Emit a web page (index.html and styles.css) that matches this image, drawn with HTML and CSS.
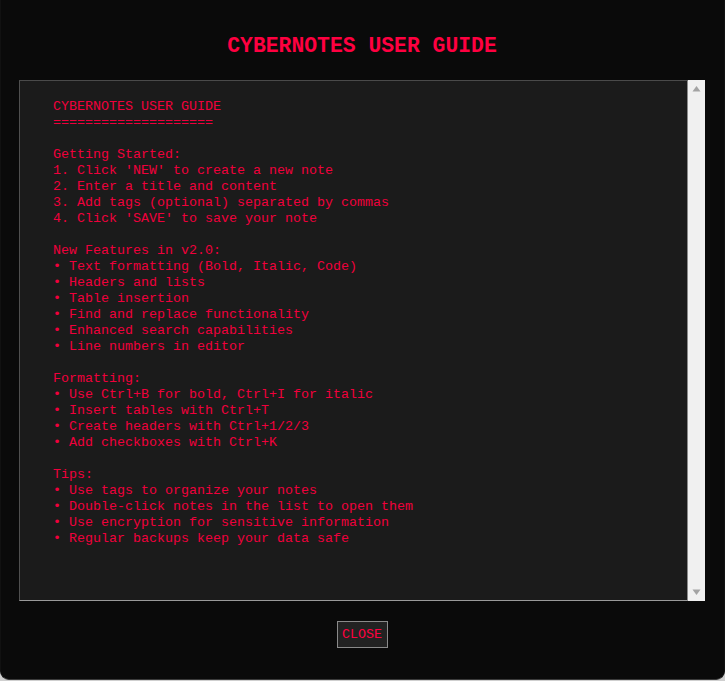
FILE: index.html
```html
<!DOCTYPE html>
<html>
<head>
<meta charset="utf-8">
<link rel="stylesheet" href="styles.css">
</head>
<body>
<div class="modal">
  <h2 class="title">CYBERNOTES USER GUIDE</h2>
  <div class="guide"><pre class="guide-text">CYBERNOTES USER GUIDE
====================

Getting Started:
1. Click 'NEW' to create a new note
2. Enter a title and content
3. Add tags (optional) separated by commas
4. Click 'SAVE' to save your note

New Features in v2.0:
• Text formatting (Bold, Italic, Code)
• Headers and lists
• Table insertion
• Find and replace functionality
• Enhanced search capabilities
• Line numbers in editor

Formatting:
• Use Ctrl+B for bold, Ctrl+I for italic
• Insert tables with Ctrl+T
• Create headers with Ctrl+1/2/3
• Add checkboxes with Ctrl+K

Tips:
• Use tags to organize your notes
• Double-click notes in the list to open them
• Use encryption for sensitive information
• Regular backups keep your data safe</pre><div class="scrollbar"><div class="scroll-btn"><svg width="17" height="17" viewBox="0 0 17 17"><polygon points="4.5,11.5 8.5,6 12.5,11.5" fill="#a3a3a3"/></svg></div><div class="scroll-btn"><svg width="17" height="17" viewBox="0 0 17 17"><polygon points="4.5,5.5 12.5,5.5 8.5,11" fill="#a3a3a3"/></svg></div></div></div>
  <div class="actions"><button class="close-btn">CLOSE</button></div>
</div>
</body>
</html>
```

FILE: styles.css
```css
html, body {
  margin: 0;
  padding: 0;
  background: #cfcfcf;
  overflow: hidden;
}
.modal {
  box-sizing: border-box;
  width: 725px;
  height: 680px;
  background: #0a0a0a;
  border: 1px solid #111;
  border-bottom-color: #3a3a3a;
  border-top: none;
  border-radius: 0 0 9px 9px;
  padding: 0 19px 0 18px;
  display: flex;
  flex-direction: column;
  font-family: "Courier New", "Nimbus Mono PS", "Nimbus Mono L", "FreeMono", "Liberation Mono", monospace;
}
.title {
  margin: 0 0 19px 0;
  padding-top: 31px;
  line-height: 30px;
  height: 30px;
  font-family: inherit;
  font-size: 21.4px;
  font-weight: bold;
  color: #ff0040;
  text-align: center;
}
.guide {
  height: 521px;
  flex: none;
  display: flex;
  background: #0a0a0a;
}
.guide-text {
  flex: 1;
  box-sizing: border-box;
  height: 100%;
  overflow: hidden;
  margin: 0;
  padding: 18px 33px 0;
  background: #1b1b1b;
  border-top: 1px solid #4a4a4a;
  border-left: 1px solid #4f4f4f;
  border-right: 1px solid #8a8a8a;
  border-bottom: 1px solid #9a9a9a;
  font-family: inherit;
  font-size: 13.33px;
  line-height: 16px;
  color: #f0003c;
  white-space: pre;
}
.scrollbar {
  width: 17px;
  flex: none;
  background: #f0f0f0;
  display: flex;
  flex-direction: column;
  justify-content: space-between;
}
.scroll-btn {
  height: 17px;
}
.scroll-btn svg {
  display: block;
}
.actions {
  display: flex;
  justify-content: center;
  padding-top: 20px;
}
.close-btn {
  box-sizing: border-box;
  height: 27px;
  width: 51px;
  padding: 0;
  background: #222;
  border: 1px solid #8a8a8a;
  color: #ff0040;
  font-family: inherit;
  font-size: 13.33px;
  line-height: 15px;
  cursor: pointer;
}
```
